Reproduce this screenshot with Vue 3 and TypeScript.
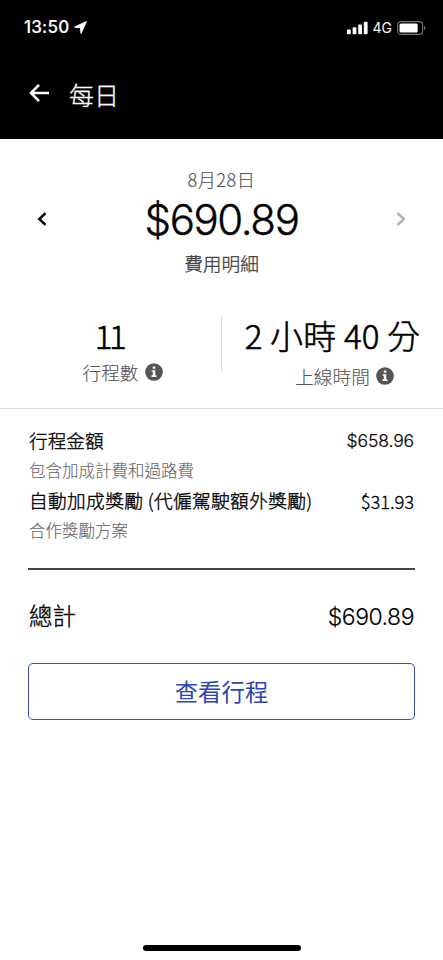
<script setup lang="ts">
interface Stat {
  value: string
  label: string
  kind: string
}
interface Fare {
  title: string
  note: string
  amount: string
  wide?: boolean
}

const stats: Stat[] = [
  { value: '11', label: '行程數', kind: 'trips' },
  { value: '2 小時 40 分', label: '上線時間', kind: 'online' },
]
const fares: Fare[] = [
  { title: '行程金額', note: '包含加成計費和過路費', amount: '$658.96' },
  { title: '自動加成獎勵 (代僱駕駛額外獎勵)', note: '合作獎勵方案', amount: '$31.93', wide: true },
]
</script>

<template>
  <main class="screen">
    <header class="top">
      <div class="status">
        <div class="clock">
          <span>13:50</span>
          <svg class="location" width="13" height="13" viewBox="0 0 13 13"><path d="M12.2.8.9 6.1l5.6.5.5 5.6z" fill="#fff" stroke="#fff" stroke-width="1.1" stroke-linejoin="round" /></svg>
        </div>
        <div class="signals">
          <svg width="21" height="14" viewBox="0 0 21 14" fill="#fff">
            <rect x="0" y="8.5" width="3.8" height="4.7" rx="1" />
            <rect x="5.6" y="6.3" width="3.8" height="6.9" rx="1" />
            <rect x="11.2" y="3.6" width="3.8" height="9.6" rx="1" />
            <rect x="16.8" y="0.8" width="3.8" height="12.4" rx="1" />
          </svg>
          <span class="network">4G</span>
          <svg width="29" height="14" viewBox="0 0 29 14">
            <rect x=".6" y=".6" width="25" height="12.8" rx="3.5" fill="none" stroke="#777" stroke-width="1.1" />
            <rect x="2.5" y="2.4" width="18.2" height="9.2" rx="1.5" fill="#fff" />
            <path d="M27 4.8c1.8.7 1.8 3.7 0 4.4z" fill="#777" />
          </svg>
        </div>
      </div>
      <div class="nav">
        <svg width="21" height="20" viewBox="0 0 21 20" fill="none" stroke="#fff" stroke-width="2.6"><path d="M20 10H2.2M10 1.8 2 10l8 8.2" /></svg>
        <h1>每日</h1>
      </div>
    </header>

    <section class="summary">
      <svg class="prev" width="10" height="14" viewBox="0 0 10 14" fill="none" stroke="#000" stroke-width="2.5"><path d="M8.5 1.2 2.3 7l6.2 5.8" /></svg>
      <div class="day">
        <p class="date">8月28日</p>
        <p class="total">$690.89</p>
        <p class="breakdown">費用明細</p>
      </div>
      <svg class="next" width="10" height="14" viewBox="0 0 10 14" fill="none" stroke="#b3b3b3" stroke-width="2.5"><path d="m1.5 1 6.4 6-6.4 6" /></svg>
    </section>

    <section class="stats">
      <div v-for="s in stats" :key="s.kind" class="stat" :class="s.kind">
        <p class="value">{{ s.value }}</p>
        <p class="label">
          {{ s.label }}
          <svg class="info" width="18" height="18" viewBox="0 0 18 18">
            <circle cx="9" cy="9" r="8.8" fill="#555" />
            <path d="M7.8 3.5h2.5v2.3H7.8zM6.6 7.3h3.7v5h1.2v1.6H6.5v-1.6h1.3V8.8H6.6z" fill="#fff" />
          </svg>
        </p>
      </div>
    </section>

    <section class="details">
      <div v-for="f in fares" :key="f.title" class="fare">
        <div class="line">
          <span class="name" :class="{ wide: f.wide }">{{ f.title }}</span>
          <span class="amount" :class="{ short: f.wide }">{{ f.amount }}</span>
        </div>
        <p class="note">{{ f.note }}</p>
      </div>
      <div class="sum">
        <span class="sum-label">總計</span>
        <span class="sum-amount">$690.89</span>
      </div>
      <button type="button" class="view">查看行程</button>
    </section>

    <div class="home"></div>
  </main>
</template>

<style>
body {
  margin: 0;
  background: #fff;
}
</style>

<style scoped>
.screen {
  display: flex;
  flex-direction: column;
  width: 443px;
  height: 960px;
  overflow: hidden;
  background: #fff;
  color: #000;
  font-family: "Noto Sans CJK TC", sans-serif;
}
p,
h1 {
  margin: 0;
  font-weight: 400;
}
svg {
  display: block;
  flex: none;
}
.top {
  box-sizing: border-box;
  height: 139px;
  padding: 16px 17px 0 23px;
  background: #000;
  color: #fff;
}
.status {
  display: flex;
  justify-content: space-between;
  height: 23px;
  align-items: center;
}
.clock,
.signals {
  display: flex;
  align-items: center;
}
.clock {
  gap: 5px;
  padding-left: 1px;
  font: 500 17px/23px Inter, sans-serif;
  letter-spacing: 0.2px;
  -webkit-text-stroke: 0.15px;
}
.network {
  margin: 0 5px 0 5px;
  font: 400 14px/22px Inter, sans-serif;
}
.nav {
  display: flex;
  align-items: center;
  gap: 19px;
  height: 40px;
  margin: 34px 0 0 6px;
}
h1 {
  padding-top: 1px;
  font-size: 25px;
  font-weight: 300;
  line-height: 40px;
  -webkit-text-stroke: 0.3px;
}
.summary {
  display: flex;
  justify-content: space-between;
  align-items: flex-start;
  box-sizing: border-box;
  height: 153px;
  padding: 27px 37px 0 37px;
}
.prev,
.next {
  margin-top: 46px;
}
.day {
  text-align: center;
}
.date {
  color: #555;
  font-size: 18.2px;
  font-weight: 300;
  line-height: 26px;
  letter-spacing: 0.5px;
  -webkit-text-stroke: 0.15px;
}
.total {
  padding-top: 1px;
  font: 300 42px/54px Inter, sans-serif;
  letter-spacing: -1.4px;
  -webkit-text-stroke: 0.4px;
}
.breakdown {
  color: #444;
  font-size: 18.7px;
  font-weight: 300;
  line-height: 32px;
  -webkit-text-stroke: 0.35px;
}
.stats {
  display: grid;
  grid-template-columns: 221px 222px;
  box-sizing: border-box;
  height: 117px;
  border-bottom: 1px solid #ddd;
  padding-top: 23px;
}
.stat {
  box-sizing: border-box;
  height: 56px;
  text-align: center;
}
.online {
  border-left: 1px solid #ddd;
}
.value {
  margin-top: -1px;
  font-size: 33px;
  font-weight: 300;
  line-height: 43px;
  letter-spacing: 0.2px;
  white-space: nowrap;
  -webkit-text-stroke: 0.6px;
}
.trips .value {
  letter-spacing: -3.5px;
  padding-right: 3px;
}
.label {
  position: relative;
  width: max-content;
  margin: 0 auto;
  color: #555;
  font-size: 18.7px;
  font-weight: 300;
  line-height: 30px;
  -webkit-text-stroke: 0.1px;
}
.online .label {
  margin-top: 4px;
}
.info {
  position: absolute;
  left: calc(100% + 6px);
  top: 6px;
}
.details {
  padding: 16px 28px 0 28px;
}
.line {
  display: flex;
  justify-content: space-between;
  align-items: center;
  height: 28px;
  padding: 0 1px;
}
.name {
  font-size: 18.7px;
  font-weight: 300;
  white-space: nowrap;
  -webkit-text-stroke: 0.35px;
}
.name.wide {
  letter-spacing: 0.35px;
}
.amount {
  padding-top: 4px;
  font: 300 17.5px/24px Inter, sans-serif;
  letter-spacing: -0.1px;
  -webkit-text-stroke: 0.2px;
}
.amount.short {
  font: 300 18.4px/24px "Noto Sans CJK TC", sans-serif;
  -webkit-text-stroke: 0.3px;
}
.note {
  height: 32px;
  padding-left: 1px;
  color: #666;
  font-size: 16.5px;
  font-weight: 300;
  line-height: 35px;
  -webkit-text-stroke: 0.1px;
}
.sum {
  display: flex;
  justify-content: space-between;
  align-items: center;
  box-sizing: border-box;
  height: 95px;
  margin-top: 23px;
  padding: 0 1px;
  border-top: 2px solid #444;
}
.sum-label {
  margin-top: -3px;
  font-size: 23.4px;
  font-weight: 300;
  -webkit-text-stroke: 0.35px;
}
.sum-amount {
  font: 300 23px/30px Inter, sans-serif;
  letter-spacing: -0.5px;
  -webkit-text-stroke: 0.15px;
}
.view {
  display: block;
  box-sizing: border-box;
  width: 387px;
  height: 57px;
  border: 1.5px solid #3b4fb0;
  border-radius: 5px;
  padding: 0 0 2px;
  background: #fff;
  color: #2d45b5;
  font: 400 23.4px/50px "Noto Sans CJK TC", sans-serif;
}
.home {
  width: 158px;
  height: 6px;
  margin: auto 0 9px 143px;
  border-radius: 3px;
  background: #000;
}
</style>
